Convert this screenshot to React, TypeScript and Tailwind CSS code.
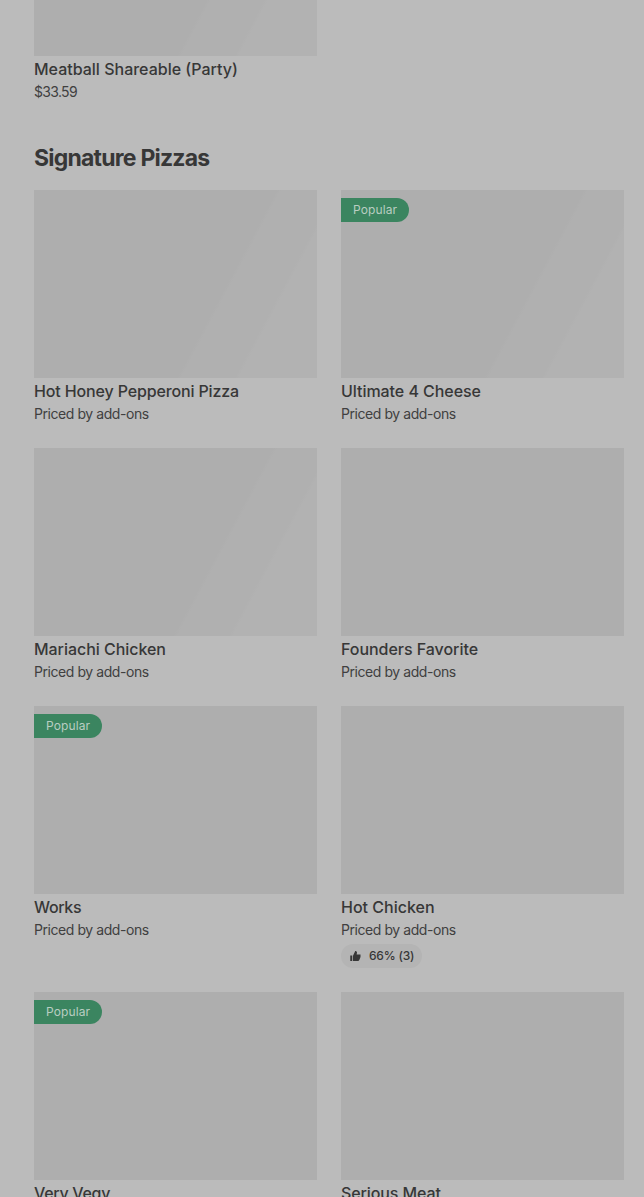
import React from "react";

type Item = {
  name: string;
  tracking?: string;
  price?: string;
  popular?: boolean;
  rating?: string;
  shimmer?: string;
};

const shimmerA =
  "bg-[linear-gradient(118deg,#aeaeae_0%,#aeaeae_63.5%,#b0b0b0_64.5%,#b0b0b0_78.5%,#b2b2b2_79.5%)]";
const shimmerB =
  "bg-[linear-gradient(118deg,#aeaeae_0%,#aeaeae_62.5%,#b0b0b0_63.5%,#b0b0b0_77%,#b2b2b2_78%)]";

const items: Item[] = [
  { name: "Hot Honey Pepperoni Pizza", tracking: "tracking-[-0.14px]", shimmer: shimmerA },
  { name: "Ultimate 4 Cheese", tracking: "tracking-[-0.05px]", popular: true, shimmer: shimmerA },
  { name: "Mariachi Chicken", tracking: "tracking-[-0.04px]", shimmer: shimmerB },
  { name: "Founders Favorite", tracking: "tracking-[-0.04px]" },
  { name: "Works", tracking: "tracking-[-0.35px]", popular: true },
  { name: "Hot Chicken", rating: "66% (3)" },
  { name: "Very Vegy", tracking: "tracking-[-0.3px]", popular: true },
  { name: "Serious Meat", tracking: "tracking-[-0.1px]" },
];

function ThumbUp() {
  return (
    <svg width="12" height="12" viewBox="0 0 24 24" fill="currentColor" aria-hidden="true">
      <path d="M2.5 11h4v11h-4zM8 11.5 12.5 2c2 0 3.5 1.4 3.5 3.4L15.2 9H23v5l-2.4 6.2c-.5 1.2-1.4 1.8-2.6 1.8H8z" />
    </svg>
  );
}

function Card({ item }: { item: Item }) {
  return (
    <article className="flex flex-col items-start">
      <div className={`flex h-[188px] w-full items-start pt-2 ${item.shimmer ?? "bg-[#aeaeae]"}`}>
        {item.popular && (
          <span className="flex h-6 w-[68px] items-center rounded-r-full bg-[#3b8560] pl-3 text-[12px] leading-5 tracking-[0.12px] text-[#b9cdc2]">
            Popular
          </span>
        )}
      </div>
      <h3 className={`mt-px mb-px text-base leading-6 font-medium whitespace-nowrap text-[#373737] ${item.tracking ?? ""}`}>
        {item.name}
      </h3>
      <p
        className={`text-sm leading-5 whitespace-nowrap text-[#404040] ${item.price ? "tracking-[-0.68px]" : "tracking-[-0.43px]"}`}
      >
        {item.price ?? "Priced by add-ons"}
      </p>
      {item.rating && (
        <div className="mt-1 flex h-6 w-[81px] items-center gap-2 rounded-full bg-[#b4b4b4] pl-2 text-[12px] leading-5 font-medium tracking-[-0.2px] whitespace-nowrap text-[#373737]">
          <ThumbUp />
          <span>{item.rating}</span>
        </div>
      )}
    </article>
  );
}

export default function App() {
  return (
    <main className="h-[1197px] overflow-hidden bg-[#bbbbbb] pr-5 pl-[34px] font-['Inter','Liberation_Sans',sans-serif]">
      <div className="-mt-[132px] grid grid-cols-[283px_283px] gap-x-6">
        <Card item={{ name: "Meatball Shareable (Party)", price: "$33.59", shimmer: shimmerA }} />
      </div>
      <h2 className="mt-10 mb-4 text-[23px] leading-8 font-bold tracking-[-0.78px] text-[#373737]">Signature Pizzas</h2>
      <div className="grid grid-cols-[283px_283px] gap-6">
        {items.map((item) => (
          <Card key={item.name} item={item} />
        ))}
      </div>
    </main>
  );
}
